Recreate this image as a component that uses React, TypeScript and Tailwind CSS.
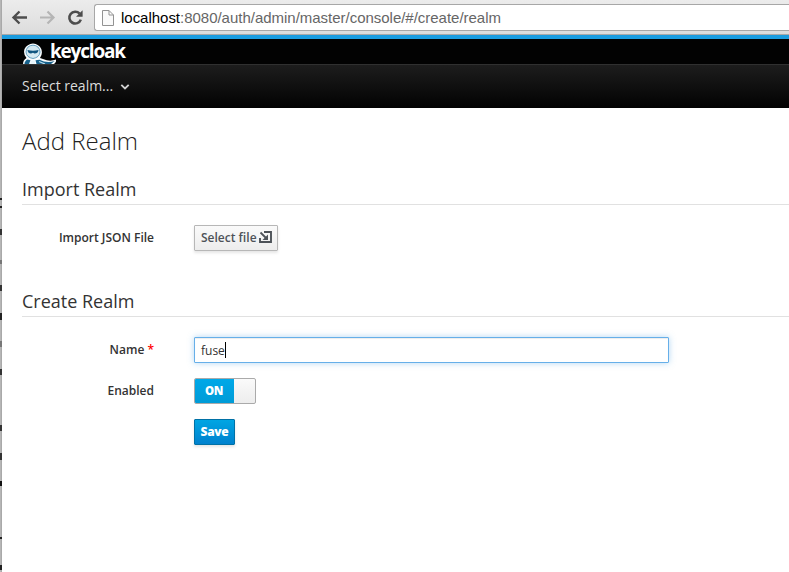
import React from "react";

const stripMarks = [
  { top: 198, height: 2, color: "#222" },
  { top: 206, height: 2, color: "#222" },
  { top: 229, height: 6, color: "#333" },
  { top: 260, height: 4, color: "#777" },
  { top: 285, height: 6, color: "#333" },
  { top: 313, height: 7, color: "#222" },
  { top: 341, height: 6, color: "#777" },
  { top: 369, height: 6, color: "#333" },
  { top: 425, height: 6, color: "#333" },
  { top: 453, height: 7, color: "#333" },
  { top: 481, height: 5, color: "#111" },
  { top: 537, height: 2, color: "#222" },
  { top: 565, height: 5, color: "#222" },
];

function WindowEdge() {
  return (
    <div className="relative w-[2px] shrink-0 bg-[linear-gradient(90deg,#bdbdbd,#a2a2a2)]">
      {stripMarks.map((m) => (
        <span
          key={m.top}
          className="absolute left-0 w-[2px]"
          style={{ top: m.top, height: m.height, background: m.color }}
        />
      ))}
    </div>
  );
}

function BrowserBar() {
  return (
    <div className="flex h-[35px] items-start border-b border-[#a9a9a9] bg-[linear-gradient(#ececec,#dcdcdc)]">
      <svg width="92" height="34" viewBox="2 0 92 34" fill="none" className="shrink-0">
        <path d="M27 17.5H14M19.5 11.5L13.5 17.5L19.5 23.5" stroke="#4d4d4d" strokeWidth="2.4" />
        <path d="M40 17.5H53M47.5 11.5L53.5 17.5L47.5 23.5" stroke="#b5b5b5" strokeWidth="2.2" />
        <path d="M79.6 13.6A5.9 5.9 0 1 0 80.8 19.6" stroke="#4d4d4d" strokeWidth="2.6" />
        <path d="M82.6 10.2V16.8H76Z" fill="#4d4d4d" />
      </svg>
      <div className="mt-1 flex h-[27px] min-w-0 flex-1 items-center rounded-l-[3px] border border-r-0 border-[#a7a7a7] bg-white pl-[7px]">
        <svg width="12" height="16" viewBox="0 0 12 16" fill="none" className="shrink-0">
          <path d="M.5 .5H7L11.5 5V15.5H.5ZM7 .5V5H11.5" fill="#fafafa" stroke="#929292" />
        </svg>
        <span className="ml-[7px] whitespace-nowrap font-['Liberation_Sans',sans-serif] text-[15px] leading-[18px] tracking-[-0.02px] text-[#666]">
          <span className="text-black">localhost</span>:8080/auth/admin/master/console/#/create/realm
        </span>
      </div>
    </div>
  );
}

function Logo() {
  return (
    <div className="flex h-[25px]">
      <svg width="34" height="25" viewBox="22 39 34 25" className="shrink-0">
        <path d="M23 64Q23 60 26.5 58Q23 54 24.5 49Q27 44 33 43.5Q39 44 41.3 49Q43 54 40 58L43 59Q50 62 56 59.5Q57 61 54 64Z" fill="#f8fcfe" />
        <path d="M26 52Q26.5 45.5 33 45.2Q39.5 45.5 40 52Q39.5 57.5 33 58.5Q26.5 57.5 26 52Z" fill="#d5e9f1" stroke="#5b9abc" strokeWidth=".9" />
        <path d="M27.5 50Q33 51.3 38.5 50Q38 53.5 34.5 53.5L33 52.7L31 53.5Q28 53.5 27.5 50Z" fill="#0f5580" />
        <path d="M24.5 64Q24.5 61 27.5 59.5L30.5 60.3L29 64ZM35.5 60.3L39.5 59.8Q47 63.5 54.5 61L51 64H36.5Z" fill="#17618b" />
        <path d="M31 60.5H35V64H30.5Z" fill="#e6f4fa" />
        <path d="M39 61.5L45 64" stroke="#b8dcec" strokeWidth="1.3" />
      </svg>
      <span className="-ml-[6px] whitespace-nowrap pt-px font-['Open_Sans',sans-serif] text-[19px] font-bold leading-[23px] tracking-[-1.2px] text-white">keycloak</span>
    </div>
  );
}

function SectionTitle({ children }: { children: React.ReactNode }) {
  return (
    <h2 className="ml-5 h-[27px] border-b border-[#e1e1e1] text-[18px] leading-[22px] text-[#333]">{children}</h2>
  );
}

function Row({ label, children }: { label?: React.ReactNode; children: React.ReactNode }) {
  return (
    <div className="flex h-[26px] items-center">
      <div className="mr-10 w-[152px] whitespace-nowrap text-right text-[12px] font-semibold leading-[26px] text-[#333]">{label}</div>
      {children}
    </div>
  );
}

export default function App() {
  return (
    <div className="flex h-[572px] w-[789px] overflow-hidden bg-white font-['Open_Sans',sans-serif]">
      <WindowEdge />
      <div className="flex min-w-0 flex-1 flex-col">
        <BrowserBar />
        <header>
          <div className="flex h-[29px] border-t-4 border-[#1b9cdf] bg-[#020202] pl-5">
            <Logo />
          </div>
          <nav className="flex h-[44px] items-center border-t border-[#303030] bg-[linear-gradient(#1d1d1d,#020202)] pl-5 text-[14px] leading-[20px] text-[#dcdcdc]">
            <span className="mb-[2px] whitespace-nowrap font-medium">Select realm...</span>
            <svg width="10" height="8" viewBox="0 0 10 8" fill="none" className="ml-[7px] mt-px">
              <path d="M1.3 1.8L5 5.5L8.7 1.8" stroke="#d1d1d1" strokeWidth="1.8" />
            </svg>
          </nav>
        </header>
        <main className="flex flex-col">
          <h1 className="ml-5 mt-4 h-[34px] text-[24px] font-light leading-[34px] text-[#222]">Add Realm</h1>
          <div className="mt-5">
            <SectionTitle>Import Realm</SectionTitle>
            <div className="mt-5">
              <Row label="Import JSON File">
                <button className="flex h-[26px] w-[84px] items-center whitespace-nowrap rounded-[1px] border border-[#b7b7b7] bg-[linear-gradient(#fafafa,#ededed)] pl-[6px] text-[12px] font-semibold text-[#4d5258] shadow-[0_2px_3px_rgba(0,0,0,0.1)]">
                  Select file
                  <svg width="13" height="12" viewBox="0 0 13 12" fill="none" className="mb-[2px] ml-[2px] shrink-0">
                    <path d="M5 1H12V11H1V7" stroke="#4d5258" strokeWidth="1.9" />
                    <path d="M1.5 1.5L7 7" stroke="#4d5258" strokeWidth="1.8" />
                    <path d="M9 3.5V9H3.5Z" fill="#4d5258" />
                  </svg>
                </button>
              </Row>
            </div>
          </div>
          <div className="mt-[39px]">
            <SectionTitle>Create Realm</SectionTitle>
            <div className="mt-5 flex flex-col gap-[15px]">
              <Row label={<>Name <span className="text-[#f00]">*</span></>}>
                <div className="flex h-[26px] w-[475px] items-center rounded-[1px] border border-[#66afe9] bg-white pl-[6px] text-[12px] text-[#333] shadow-[inset_0_1px_1px_rgba(0,0,0,0.075),0_0_6px_rgba(102,175,233,0.5)]">
                  <span className="pt-[2px] leading-[18px]">fuse</span>
                  <span className="h-4 w-px bg-black" />
                </div>
              </Row>
              <Row label="Enabled">
                <div className="flex h-[26px] w-[62px] overflow-hidden rounded-[2px] border border-[#aaa] bg-[linear-gradient(#fafafa,#ededed)]">
                  <span className="w-[39px] bg-[linear-gradient(#00a8e8,#009bd7)] pr-px text-center text-[11.5px] font-extrabold leading-[24px] tracking-[-0.3px] text-white">ON</span>
                </div>
              </Row>
              <Row>
                <button className="h-[26px] w-[41px] rounded-[1px] border border-[#0071a6] bg-[linear-gradient(#00a5e3,#0081ce)] text-center text-[12px] font-extrabold leading-[24px] tracking-[-0.3px] text-white shadow-[0_2px_3px_rgba(0,0,0,0.1)]">Save</button>
              </Row>
            </div>
          </div>
        </main>
      </div>
    </div>
  );
}
